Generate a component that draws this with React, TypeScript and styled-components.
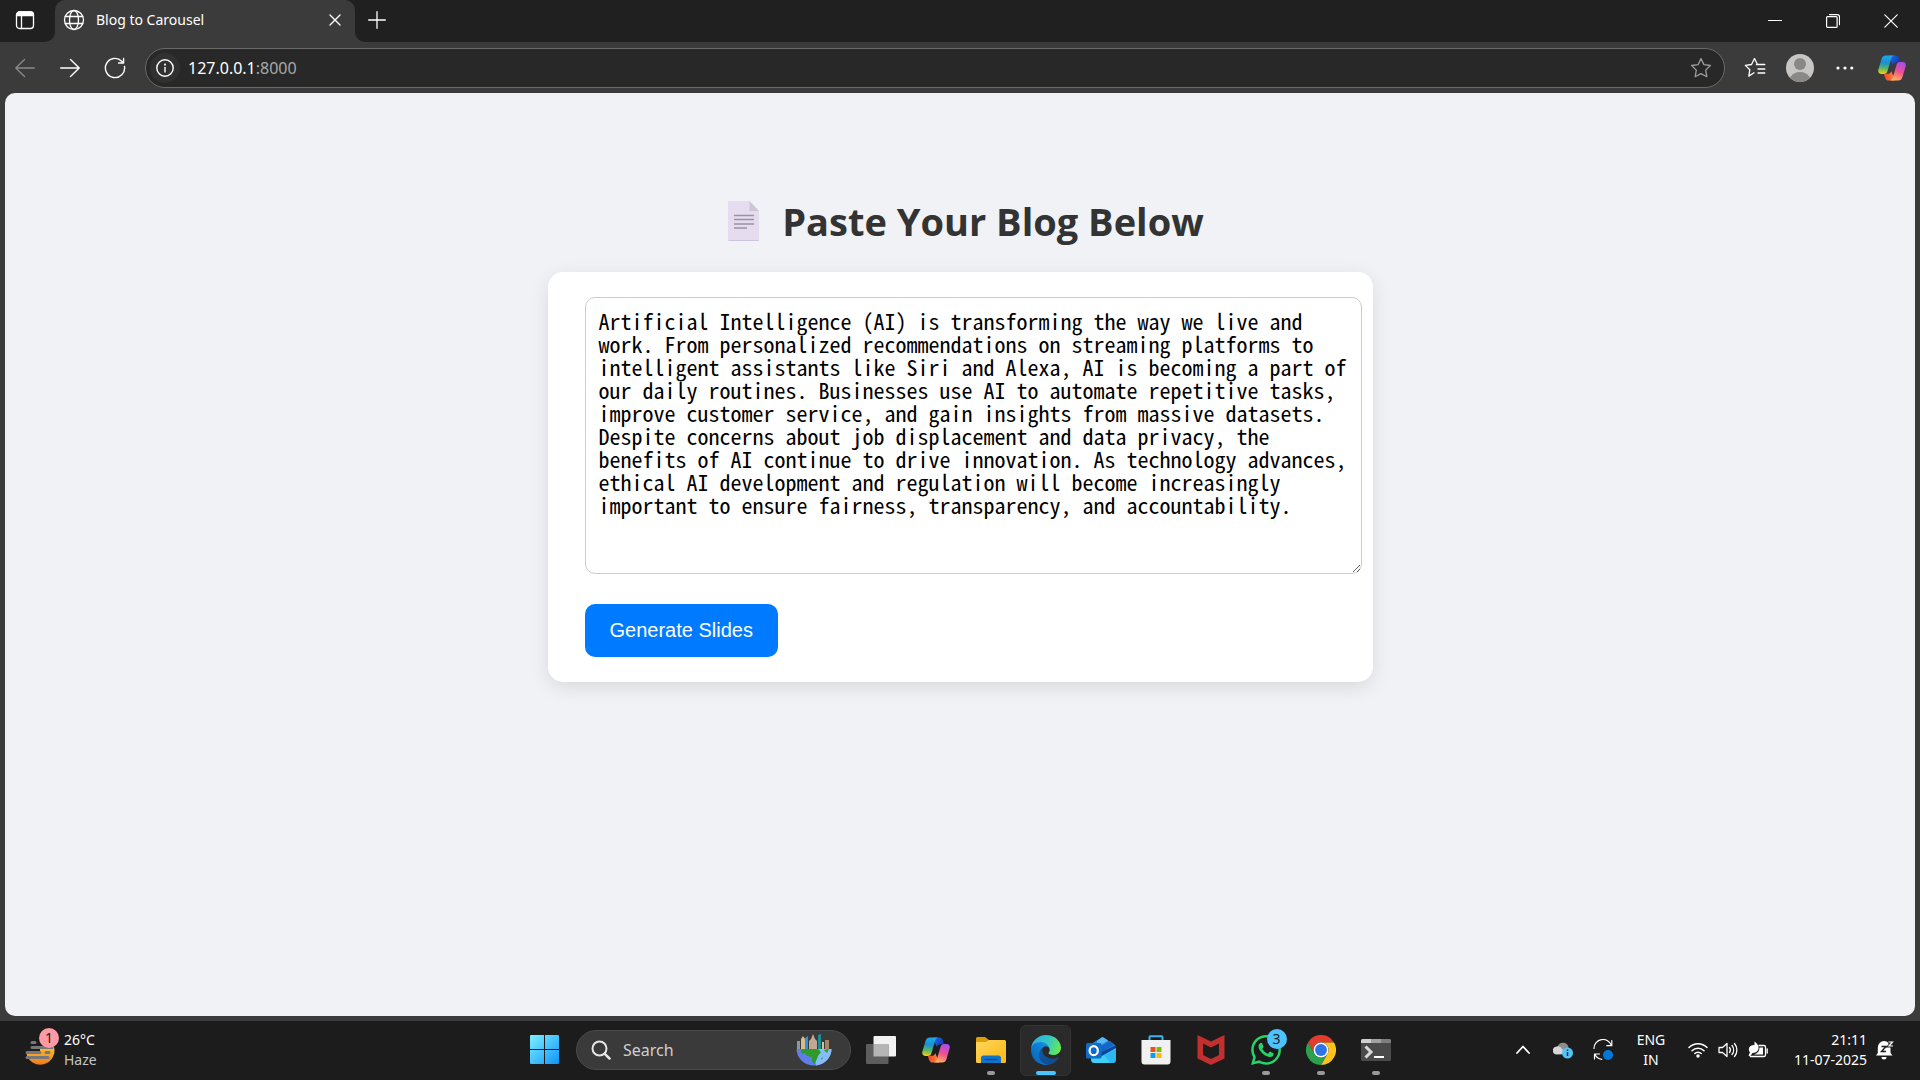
import React from "react";
import styled, { createGlobalStyle } from "styled-components";

const Global = createGlobalStyle`
  * { box-sizing: border-box; }
  body {
    margin: 0;
    background: #1c1c1c;
    font-family: "Noto Sans", "Open Sans", sans-serif;
  }
  button { font: inherit; color: inherit; }
`;

const Desktop = styled.div`
  display: flex;
  flex-direction: column;
  min-height: 100vh;
`;

/* ---------- browser window ---------- */

const Browser = styled.div`
  flex: 1;
  display: flex;
  flex-direction: column;
  background: #3b3b3b;
`;

const TitleBar = styled.header`
  display: flex;
  height: 42px;
  color: #fff;
`;

const StripStart = styled.div`
  width: 55px;
  display: flex;
  align-items: center;
  justify-content: center;
  padding: 0 5px 2px 0;
  background: #202020;
  border-bottom-right-radius: 10px;
`;

const StripEnd = styled.div`
  flex: 1;
  display: flex;
  justify-content: space-between;
  background: #202020;
  border-bottom-left-radius: 10px;
`;

const TabCell = styled.div`
  width: 300px;
  background: linear-gradient(#202020 20px, transparent 20px);
`;

const Tab = styled.div`
  display: flex;
  align-items: center;
  height: 42px;
  padding: 0 8px 2px 8px;
  background: #3b3b3b;
  border-radius: 10px 10px 0 0;
`;

const TabTitle = styled.span`
  flex: 1;
  margin-left: 11px;
  font-size: 14px;
  line-height: 20px;
`;

const IconButton = styled.button<{ $w?: number; $h?: number }>`
  display: flex;
  align-items: center;
  justify-content: center;
  width: ${(p) => p.$w ?? 24}px;
  height: ${(p) => p.$h ?? 24}px;
  padding: 0;
  border: 0;
  background: none;
  color: #fff;
  &:disabled { color: #8a8a8a; }
`;

const WindowControls = styled.div`
  display: flex;
`;

const Toolbar = styled.nav`
  display: flex;
  align-items: center;
  height: 51px;
`;

const NavButtons = styled.div`
  display: flex;
  padding: 0 8px 0 2px;
`;

const AddressBar = styled.div`
  flex: 1;
  display: flex;
  align-items: center;
  height: 40px;
  padding: 0 11px 0 4px;
  background: #282828;
  border: 1px solid #6a6a6a;
  border-radius: 20px;
  color: #fff;
`;

const SiteInfo = styled.span`
  display: flex;
  align-items: center;
  justify-content: center;
  width: 30px;
  height: 30px;
  margin-right: 8px;
  border-radius: 50%;
  background: #313131;
`;

const Url = styled.span`
  flex: 1;
  font-size: 16px;
  line-height: 24px;
`;

const Port = styled.span`
  color: #a9a9a9;
`;

const ToolbarEnd = styled.div`
  display: flex;
  padding: 0 3px 0 7px;
`;

/* ---------- page ---------- */

const Page = styled.main`
  flex: 1;
  margin: 0 5px 5px;
  padding: 102px 20px 40px;
  background: #f0f2f5;
  border-radius: 10px;
`;

const Heading = styled.h1`
  display: flex;
  align-items: center;
  justify-content: center;
  gap: 11px;
  margin: 0 0 25px;
  font-size: 38px;
  line-height: 52px;
  font-weight: 700;
  color: #333;
  font-family: "Open Sans", "Noto Sans", sans-serif;
`;

const Card = styled.form`
  display: flex;
  flex-direction: column;
  align-items: flex-start;
  gap: 30px;
  max-width: 825px;
  margin: 0 auto;
  padding: 25px 11px 25px 37px;
  background: #fff;
  border-radius: 15px;
  box-shadow: 0 5px 19px rgba(0, 0, 0, 0.1);
`;

const BlogText = styled.textarea`
  width: 100%;
  height: 277px;
  padding: 11px 13px;
  border: 1px solid #ccc;
  border-radius: 10px;
  background: #fff;
  color: #000;
  font-family: "Noto Sans Mono CJK SC", "DejaVu Sans Mono", monospace;
  font-size: 22px;
  line-height: 23px;
  outline: none;
  resize: both;
`;

const Generate = styled.button`
  padding: 15px 25px;
  border: 0;
  border-radius: 10px;
  background: #007bff;
  color: #fff;
  font-family: "Liberation Sans", Arial, sans-serif;
  font-size: 20px;
  line-height: 23px;
`;

/* ---------- taskbar ---------- */

const Taskbar = styled.footer`
  display: grid;
  grid-template-columns: 1fr auto 1fr;
  align-items: center;
  height: 59px;
  background: #1c1c1c;
  color: #fff;
  font-size: 14px;
  line-height: 20px;
`;

const Weather = styled.button`
  display: flex;
  align-items: center;
  gap: 6px;
  justify-self: start;
  padding: 0 0 2px 24px;
  border: 0;
  background: none;
  text-align: left;
`;

const Muted = styled.span`
  color: #c4c4c4;
`;

const Stack = styled.span<{ $align?: string }>`
  display: flex;
  flex-direction: column;
  align-items: ${(p) => p.$align ?? "flex-start"};
`;

const Apps = styled.div`
  display: flex;
  align-items: center;
`;

const Slot = styled.button<{ $active?: boolean }>`
  position: relative;
  display: flex;
  align-items: center;
  justify-content: center;
  width: 51px;
  height: 51px;
  margin: 0 2px;
  padding: 0 0 2px;
  border: 1px solid ${(p) => (p.$active ? "#343434" : "transparent")};
  border-radius: 6px;
  background: ${(p) => (p.$active ? "#2a2a2a" : "transparent")};
`;

const RunMark = styled.span<{ $active?: boolean }>`
  position: absolute;
  left: 50%;
  bottom: 0;
  width: ${(p) => (p.$active ? 20 : 8)}px;
  height: 4px;
  border-radius: 2px;
  background: ${(p) => (p.$active ? "#4cc2ff" : "#9a9a9a")};
  transform: translateX(-50%);
`;

const Badge = styled.span<{ $color: string }>`
  position: absolute;
  right: -1px;
  top: -4px;
  width: 20px;
  height: 20px;
  border-radius: 50%;
  background: ${(p) => p.$color};
  color: #1c1c1c;
  font-size: 14px;
  line-height: 20px;
  text-align: center;
`;

const IconWrap = styled.span`
  position: relative;
  display: flex;
`;

const AppBadge = styled(Badge)`
  right: -6px;
  top: -6px;
`;

const Search = styled.label`
  display: flex;
  align-items: center;
  width: 275px;
  height: 40px;
  margin: 0 2px 2px 4px;
  padding: 0 18px 0 14px;
  border: 1px solid #4a4a4a;
  border-radius: 20px;
  background: #3a3a3a;
`;

const SearchInput = styled.input`
  flex: 1;
  min-width: 0;
  margin-left: 12px;
  padding: 0;
  border: 0;
  outline: none;
  background: none;
  color: #fff;
  font: 16px/24px "Noto Sans", sans-serif;
  &::placeholder { color: #cfcfcf; opacity: 1; }
`;

const Tray = styled.div`
  display: flex;
  align-items: center;
  justify-self: end;
  padding: 0 17px 2px 0;
`;

const TrayButton = styled(IconButton)`
  height: 40px;
`;

const Lang = styled.button`
  width: 56px;
  padding: 0;
  border: 0;
  background: none;
  text-align: center;
`;

const Clock = styled.button`
  padding: 0;
  width: 90px;
  border: 0;
  background: none;
`;

/* ---------- drawings ---------- */

const line = { fill: "none", stroke: "currentColor", strokeLinecap: "round" as const, strokeLinejoin: "round" as const };

const Copilot = ({ id, size = 28 }: { id: string; size?: number }) => (
  <svg width={size} height={size} viewBox="0 0 28 28" aria-hidden="true">
    <defs>
      <linearGradient id={id + "a"} x1="0.4" y1="0" x2="0.3" y2="1">
        <stop offset="0" stopColor="#1ea8ee" />
        <stop offset="0.4" stopColor="#1c8fd0" />
        <stop offset="0.7" stopColor="#5bb765" />
        <stop offset="1" stopColor="#f4cf12" />
      </linearGradient>
      <linearGradient id={id + "b"} x1="0.7" y1="0" x2="0.4" y2="1">
        <stop offset="0" stopColor="#a74df0" />
        <stop offset="0.5" stopColor="#ee4f91" />
        <stop offset="1" stopColor="#ffb15c" />
      </linearGradient>
      <linearGradient id={id + "c"} x1="0" y1="0" x2="1" y2="0.6">
        <stop offset="0" stopColor="#1578e6" />
        <stop offset="1" stopColor="#1b32bd" />
      </linearGradient>
      <linearGradient id={id + "d"} x1="0" y1="0" x2="1" y2="0">
        <stop offset="0" stopColor="#f0432e" />
        <stop offset="1" stopColor="#ff8a3c" />
      </linearGradient>
    </defs>
    <path fill={`url(#${id}c)`} d="M11 1.4h6.2c1.9 0 3 .9 3.6 2.8l1.2 4h-3.6c-2 0-3.2.8-3.8 2.8z" />
    <path fill={`url(#${id}d)`} d="M17 26.6h-6.4c-1.9 0-3-.9-3.6-2.8l-1.2-4h3.7c2 0 3.2-.8 3.8-2.8z" />
    <path fill={`url(#${id}a)`} d="M7.8 1.4H16c-1.6.4-2.3 1.6-2.9 3.5l-3.6 12c-.7 2.2-1.7 3-3.7 3H3.6c-2.700 0-3.900-1.900-3.200-4.500L3.500 5c.7-2.400 2-3.600 4.300-3.600z" />
    <path fill={`url(#${id}b)`} d="M20.200 26.600H12c1.600-.4 2.300-1.600 2.900-3.500l3.600-12c.7-2.200 1.700-3 3.700-3h2.200c2.700 0 3.900 1.900 3.200 4.500L24.500 23c-.7 2.400-2 3.600-4.300 3.600z" />
  </svg>
);

const Doc = () => (
  <svg width="55" height="42" viewBox="0 0 55 42" aria-hidden="true">
    <path fill="#e6dcf0" d="M12.500 1h21l9.500 10v29a1 1 0 0 1-1 1h-29a1 1 0 0 1-1-1V2a1 1 0 0 1 .5-1z" />
    <path fill="#cdc5d3" d="M33.500 1 43 11h-9.500z" />
    <path fill="none" stroke="#cfc4d9" strokeWidth="1" d="M12.500 40.500h30" />
    <path fill="none" stroke="#9a92a3" strokeWidth="1.300" d="M18 15.500h20M18 19.500h20M18 24h20M18 28h13" />
  </svg>
);

const City = () => (
  <svg width="36" height="33" viewBox="0 0 36 33" aria-hidden="true">
    <path fill="#8f979a" d="M1 8h3v9H1z" />
    <path fill="#d8bd8c" d="M5 6l2-3 2 3v11H5z" />
    <path fill="#2f8fe0" d="M9 5l3-2v14H9z" />
    <path fill="#c2a793" d="M13 8l2-2 2-5 2 5 2 2v9h-8z" />
    <path fill="#178f95" d="M22 2l3-1v16h-3z" />
    <path fill="#d7c09d" d="M26 9h2v8h-2z" />
    <path fill="#a88465" d="M29 7h4v10h-4z" />
    <path fill="#5f7fe8" d="M.5 16h35a17.500 16.500 0 0 1-35 0z" />
    <path fill="#86bdf8" d="M18 16h17.500A17.500 16.500 0 0 1 20 32.400z" />
    <path fill="#2d9a2b" d="M5 17l5-1h12l3 3-3 4-2 5-2 3-2-3v-4l-5-1-2-3-3 1zM28 17l5-1-2 4z" />
    <path fill="#3ca63a" d="M25 25l2-1-1 3z" />
  </svg>
);

const Explorer = () => (
  <svg width="30" height="28" viewBox="0 0 30 28" aria-hidden="true">
    <defs>
      <linearGradient id="fold" x1="0" y1="0" x2="1" y2="1">
        <stop offset="0" stopColor="#ffd65c" />
        <stop offset="1" stopColor="#fcb813" />
      </linearGradient>
    </defs>
    <path fill="#dd9e0a" d="M0 2.500A1.500 1.500 0 0 1 1.500 1H9l4 3h5v8H0z" />
    <path fill="url(#fold)" d="M0 6h10l3-2h15.500A1.500 1.500 0 0 1 30 5.500v20a1.500 1.500 0 0 1-1.500 1.500h-27A1.500 1.500 0 0 1 0 25.500z" />
    <path fill="#1272c8" d="M5 27v-5a2.500 2.500 0 0 1 2.500-2.500h15A2.500 2.500 0 0 1 25 22v5z" />
    <path stroke="#0b4e91" strokeWidth="1.200" d="M8.500 23.500h13" />
  </svg>
);

const Edge = () => (
  <svg width="30" height="30" viewBox="0 0 256 256" aria-hidden="true">
    <defs>
      <linearGradient id="ed1" x1="0" y1="0" x2="1" y2="0.500">
        <stop offset="0" stopColor="#0c59a4" />
        <stop offset="1" stopColor="#114a8b" />
      </linearGradient>
      <linearGradient id="ed2" x1="1" y1="0" x2="0" y2="1">
        <stop offset="0" stopColor="#1b9de2" />
        <stop offset="0.500" stopColor="#0d7bd0" />
        <stop offset="1" stopColor="#0a5fb4" />
      </linearGradient>
      <linearGradient id="ed3" x1="0" y1="0.300" x2="1" y2="0.600">
        <stop offset="0" stopColor="#35a9e0" />
        <stop offset="0.500" stopColor="#33c6cb" />
        <stop offset="1" stopColor="#66eb4e" />
      </linearGradient>
    </defs>
    <path fill="url(#ed1)" d="M231 190.500c-3.400 1.800-6.900 3.400-10.500 4.700a101.900 101.900 0 0 1-35.900 6.500c-47.300 0-88.500-32.500-88.500-74.300a31.500 31.500 0 0 1 16.400-27.300c-42.800 1.800-53.800 46.400-53.800 72.500 0 74 68.100 81.400 82.800 81.400 7.900 0 19.800-2.300 27-4.600l1.300-.4a128.300 128.300 0 0 0 66.600-52.800 4 4 0 0 0-5.400-5.700z" />
    <path fill="url(#ed2)" d="M105.700 241.400a79.200 79.200 0 0 1-22.700-21.300 80.700 80.700 0 0 1 29.500-120c3.100-1.500 8.500-4.100 15.600-4a32.400 32.400 0 0 1 25.700 13 31.900 31.900 0 0 1 6.300 18.700c0-.2 24.500-79.600-80-79.600-43.900 0-80 41.600-80 78.200a130.200 130.200 0 0 0 12.100 56 128 128 0 0 0 156.400 67 75.600 75.600 0 0 1-62.800-8z" />
    <path fill="url(#ed3)" d="M152.300 148.900c-.8 1-3.300 2.500-3.300 5.700 0 2.600 1.700 5.200 4.800 7.300 14.300 10 41.400 8.600 41.500 8.600a59.600 59.600 0 0 0 30.300-8.300 61.400 61.400 0 0 0 30.400-52.900c.3-22.400-8-37.300-11.300-43.900C223.500 23.900 177.700 0 128 0A128 128 0 0 0 0 126.200c.5-36.500 36.800-66 80-66 3.500 0 23.500.3 42 10.100 16.300 8.600 24.900 18.900 30.800 29.200 6.200 10.700 7.300 24.100 7.300 29.500s-2.700 13.300-7.800 19.900z" />
  </svg>
);

const Outlook = () => (
  <svg width="30" height="28" viewBox="0 0 30 28" aria-hidden="true">
    <path fill="#1b86de" d="M5 8 15.500 1.600a2 2 0 0 1 2 0L29 9v10H5z" />
    <path fill="#56b8f5" d="M11 5l4.500-3.400a2 2 0 0 1 2 0L22 4.500 12 11z" />
    <path fill="#1565c8" d="M12 12 24 5l4.500 3.200L15 17z" />
    <path fill="#0b459c" d="M14 17 30 9v4L16 22z" />
    <path fill="#3fd0f7" d="M15 20.500 30 12v11.500a3.500 3.500 0 0 1-3.500 3.500h-18A3.500 3.500 0 0 1 5 23.500V21z" />
    <path fill="#1b9be8" d="M30 12v11.500a3.500 3.500 0 0 1-3.500 3.500H24l-6-8.300z" opacity=".45" />
    <rect y="7" width="15.500" height="15.500" rx="1.500" fill="#0f6cc9" />
    <ellipse cx="7.700" cy="14.700" rx="4.100" ry="4.500" fill="none" stroke="#fff" strokeWidth="2.200" />
  </svg>
);

const Store = () => (
  <svg width="30" height="30" viewBox="0 0 30 30" aria-hidden="true">
    <path fill="none" stroke="#37b6f0" strokeWidth="2" d="M8.500 6V2a.8.8 0 0 1 .8-.8h11.400a.8.8 0 0 1 .8.800v4" />
    <path fill="#f1f1f1" d="M.5 5h29v21.500a3 3 0 0 1-3 3h-23a3 3 0 0 1-3-3z" />
    <path fill="#f04f24" d="M9.500 12h5v5h-5z" />
    <path fill="#80ba01" d="M15.500 12h5v5h-5z" />
    <path fill="#02a4ef" d="M9.500 18h5v5h-5z" />
    <path fill="#ffb902" d="M15.500 18h5v5h-5z" />
  </svg>
);

const McAfee = () => (
  <svg width="28" height="30" viewBox="0 0 28 30" aria-hidden="true">
    <path fill="#c22f2f" d="M.5 0 14 6.500 27.500 0v23.500L14 30 .5 23.500zM6 8.500V20l8 4 8-4V8.500l-8 4z" fillRule="evenodd" />
  </svg>
);

const WhatsApp = () => (
  <svg width="30" height="30" viewBox="0 0 24 24" aria-hidden="true">
    <path fill="#25d366" d="M17.472 14.382c-.297-.149-1.758-.867-2.030-.967-.273-.099-.471-.148-.67.150-.197.297-.767.966-.94 1.164-.173.199-.347.223-.644.075-.297-.150-1.255-.463-2.390-1.475-.883-.788-1.480-1.761-1.653-2.059-.173-.297-.018-.458.130-.606.134-.133.298-.347.446-.520.149-.174.198-.298.298-.497.099-.198.050-.371-.025-.520-.075-.149-.669-1.612-.916-2.207-.242-.579-.487-.500-.669-.510-.173-.008-.371-.010-.570-.010-.198 0-.520.074-.792.372-.272.297-1.040 1.016-1.040 2.479 0 1.462 1.065 2.875 1.213 3.074.149.198 2.096 3.200 5.077 4.487.709.306 1.262.489 1.694.625.712.227 1.360.195 1.871.118.571-.085 1.758-.719 2.006-1.413.248-.694.248-1.289.173-1.413-.074-.124-.272-.198-.570-.347m-5.421 7.403h-.004a9.870 9.870 0 0 1-5.031-1.378l-.361-.214-3.741.982.998-3.648-.235-.374a9.860 9.860 0 0 1-1.510-5.260c.001-5.450 4.436-9.884 9.888-9.884 2.640 0 5.122 1.030 6.988 2.898a9.825 9.825 0 0 1 2.893 6.994c-.003 5.450-4.437 9.884-9.885 9.884m8.413-18.297A11.815 11.815 0 0 0 12.050 0C5.495 0 .160 5.335.157 11.892c0 2.096.547 4.142 1.588 5.945L.057 24l6.305-1.654a11.882 11.882 0 0 0 5.683 1.448h.005c6.554 0 11.890-5.335 11.893-11.893a11.821 11.821 0 0 0-3.480-8.413z" />
  </svg>
);

const Chrome = () => (
  <svg width="30" height="30" viewBox="0 0 48 48" aria-hidden="true">
    <path fill="#e33b2e" d="M3.200 12a24 24 0 0 1 41.600 0H24a12 12 0 0 0-10.400 18z" />
    <path fill="#fcc31e" d="M44.800 12A24 24 0 0 1 24 48l10.400-18A12 12 0 0 0 24 12z" />
    <path fill="#2da04d" d="M24 48A24 24 0 0 1 3.200 12l10.400 18a12 12 0 0 0 20.800 0z" />
    <circle cx="24" cy="24" r="12" fill="#fff" />
    <circle cx="24" cy="24" r="9.500" fill="#2f73e8" />
  </svg>
);

const Terminal = () => (
  <svg width="30" height="22" viewBox="0 0 30 22" aria-hidden="true">
    <rect width="30" height="22" rx="1.500" fill="#4a4a4a" />
    <path fill="#cfcfcf" d="M0 4V1.500A1.500 1.500 0 0 1 1.500 0H10v4z" />
    <path fill="#a2a2a2" d="M10 0h10v4H10z" />
    <path fill="#7f7f7f" d="M20 0h8.500A1.500 1.500 0 0 1 30 1.500V4H20z" />
    <path fill="none" stroke="#d9d9d9" strokeWidth="3" d="m4.500 7.500 5.500 5.500-5.500 5.500" />
    <path stroke="#fff" strokeWidth="2" d="M13 18h10" />
  </svg>
);

const Windows = () => (
  <svg width="29" height="29" viewBox="0 0 29 29" aria-hidden="true">
    <defs>
      <linearGradient id="win" gradientUnits="userSpaceOnUse" x1="0" y1="0" x2="29" y2="29">
        <stop offset="0" stopColor="#7cf0ff" />
        <stop offset="0.500" stopColor="#47c2fc" />
        <stop offset="1" stopColor="#0f95fb" />
      </linearGradient>
    </defs>
    <path fill="url(#win)" d="M1 0h13v14H0V1a1 1 0 0 1 1-1zM15 0h13a1 1 0 0 1 1 1v13H15zM0 15h14v14H1a1 1 0 0 1-1-1zM15 15h14v13a1 1 0 0 1-1 1H15z" />
  </svg>
);

const TaskView = () => (
  <svg width="30" height="28" viewBox="0 0 30 28" aria-hidden="true">
    <rect x="7.500" width="22.500" height="20.500" rx="1" fill="#f2f2f2" />
    <rect y="8" width="22.500" height="20" rx="1" fill="#5d5d5d" />
    <path fill="#b5b5b5" d="M7.500 8h15v12.500h-15z" />
  </svg>
);

const Haze = () => (
  <svg width="34" height="36" viewBox="0 0 34 36" aria-hidden="true">
    <defs>
      <linearGradient id="sun" x1="0" y1="0" x2="0" y2="1">
        <stop offset="0" stopColor="#fbc02d" />
        <stop offset="1" stopColor="#f07a1d" />
      </linearGradient>
    </defs>
    <path fill="url(#sun)" d="M16 15h14a14 14 0 0 1-27.500 7h13.500z" />
    <path fill="none" stroke="#777" strokeWidth="3" strokeLinecap="round" d="M8 10.500h3M8 15.500h20M3 20.500h13M22 20.500h3M3 25.500h21" />
  </svg>
);

export default function App() {
  return (
    <Desktop>
      <Global />
      <Browser>
        <TitleBar>
          <StripStart>
            <IconButton aria-label="Tab actions">
              <svg width="20" height="20" viewBox="0 0 20 20" {...line} strokeWidth="1.300">
                <rect x="1.500" y="2" width="17" height="16.500" rx="3" />
                <path d="M1.500 5.500V5a3 3 0 0 1 3-3h11a3 3 0 0 1 3 3v.5z" fill="currentColor" />
                <path d="M6.500 6v12.500" />
              </svg>
            </IconButton>
          </StripStart>
          <TabCell>
            <Tab>
              <svg width="22" height="22" viewBox="0 0 22 22" {...line} strokeWidth="1.300" aria-hidden="true">
                <circle cx="11" cy="11" r="9.500" />
                <ellipse cx="11" cy="11" rx="4.500" ry="9.500" />
                <path d="M2.300 7.500h17.400M2.300 14.500h17.400" />
              </svg>
              <TabTitle>Blog to Carousel</TabTitle>
              <IconButton aria-label="Close tab">
                <svg width="12" height="12" viewBox="0 0 12 12" {...line} strokeWidth="1.400"><path d="m1 1 10 10M11 1 1 11" /></svg>
              </IconButton>
            </Tab>
          </TabCell>
          <StripEnd>
            <IconButton $w={44} $h={39} aria-label="New tab">
              <svg width="18" height="18" viewBox="0 0 18 18" {...line} strokeWidth="1.300"><path d="M9 .7v16.600M.7 9h16.600" /></svg>
            </IconButton>
            <WindowControls>
              <IconButton $w={58} $h={42} aria-label="Minimize">
                <svg width="14" height="14" viewBox="0 0 14 14" {...line}><path d="M.5 6.500h13" /></svg>
              </IconButton>
              <IconButton $w={58} $h={42} aria-label="Restore">
                <svg width="14" height="14" viewBox="0 0 14 14" {...line} strokeWidth="1.200">
                  <rect x=".6" y="2.600" width="10.500" height="10.800" rx="1" />
                  <path d="M3.500.6h7.800a2.200 2.200 0 0 1 2.200 2.200v7.800" />
                </svg>
              </IconButton>
              <IconButton $w={58} $h={42} aria-label="Close">
                <svg width="14" height="14" viewBox="0 0 14 14" {...line} strokeWidth="1.200"><path d="m.8.8 12.400 12.400M13.200.8.8 13.200" /></svg>
              </IconButton>
            </WindowControls>
          </StripEnd>
        </TitleBar>

        <Toolbar>
          <NavButtons>
            <IconButton $w={45} $h={40} disabled aria-label="Back">
              <svg width="20" height="20" viewBox="0 0 20 20" {...line} strokeWidth="1.300"><path d="M19.300 10H.8M9.500 1.500.8 10l8.700 8.500" /></svg>
            </IconButton>
            <IconButton $w={45} $h={40} aria-label="Forward">
              <svg width="20" height="20" viewBox="0 0 20 20" {...line} strokeWidth="1.400"><path d="M.7 10h18.500M10.500 1.500l8.700 8.500-8.700 8.500" /></svg>
            </IconButton>
            <IconButton $w={45} $h={40} aria-label="Reload">
              <svg width="22" height="22" viewBox="0 0 22 22" {...line} strokeWidth="1.400"><path d="M20.500 9.500A9.600 9.600 0 1 1 17.800 4.200L19.300 6M19.600 1.500V6h-5" /></svg>
            </IconButton>
          </NavButtons>
          <AddressBar>
            <SiteInfo>
              <svg width="18" height="18" viewBox="0 0 18 18" {...line} strokeWidth="1.400" aria-hidden="true">
                <circle cx="9" cy="9" r="8.200" />
                <path d="M9 8.500V13" />
                <circle cx="9" cy="5.600" r=".4" />
              </svg>
            </SiteInfo>
            <Url>127.0.0.1<Port>:8000</Port></Url>
            <IconButton aria-label="Add to favorites">
              <svg width="22" height="22" viewBox="0 0 22 22" {...line} stroke="#9b9b9b" strokeWidth="1.300">
                <path d="m11 1.600 2.900 6 6.500.9-4.700 4.600 1.100 6.600-5.800-3.100-5.800 3.100 1.100-6.600L1.600 8.500l6.500-.9z" />
              </svg>
            </IconButton>
          </AddressBar>
          <ToolbarEnd>
            <IconButton $w={45} $h={40} aria-label="Favorites">
              <svg width="22" height="22" viewBox="0 0 22 22" {...line} strokeWidth="1.300">
                <path d="M12.500 7.500h8.300M14 12h6.800M14 16h6.800M10 15.800l-5.200 3.300 1-6.300L1.300 8.400l6.200-.9L10.500 1.500l3 6" />
              </svg>
            </IconButton>
            <IconButton $w={45} $h={40} aria-label="Profile">
              <svg width="28" height="28" viewBox="0 0 28 28">
                <defs><clipPath id="face"><circle cx="14" cy="14" r="14" /></clipPath></defs>
                <g clipPath="url(#face)">
                  <path fill="#c8c6c4" d="M0 0h28v28H0z" />
                  <circle cx="14" cy="10" r="6" fill="#8a8886" />
                  <ellipse cx="14" cy="25.500" rx="10" ry="7.500" fill="#8a8886" />
                </g>
              </svg>
            </IconButton>
            <IconButton $w={45} $h={40} aria-label="Settings and more">
              <svg width="18" height="4" viewBox="0 0 18 4" fill="currentColor"><circle cx="2" cy="2" r="1.600" /><circle cx="9" cy="2" r="1.600" /><circle cx="15.800" cy="2" r="1.600" /></svg>
            </IconButton>
            <IconButton $w={50} $h={40} aria-label="Copilot"><Copilot id="cpa" /></IconButton>
          </ToolbarEnd>
        </Toolbar>

        <Page>
          <Heading><Doc />Paste Your Blog Below</Heading>
          <Card onSubmit={(e) => e.preventDefault()}>
            <BlogText
              aria-label="Blog text"
              spellCheck={false}
              defaultValue="Artificial Intelligence (AI) is transforming the way we live and work. From personalized recommendations on streaming platforms to intelligent assistants like Siri and Alexa, AI is becoming a part of our daily routines. Businesses use AI to automate repetitive tasks, improve customer service, and gain insights from massive datasets. Despite concerns about job displacement and data privacy, the benefits of AI continue to drive innovation. As technology advances, ethical AI development and regulation will become increasingly important to ensure fairness, transparency, and accountability."
            />
            <Generate type="submit">Generate Slides</Generate>
          </Card>
        </Page>
      </Browser>

      <Taskbar>
        <Weather>
          <IconWrap><Haze /><Badge $color="#ff99a4">1</Badge></IconWrap>
          <Stack><span>26°C</span><Muted>Haze</Muted></Stack>
        </Weather>

        <Apps>
          <Slot aria-label="Start"><Windows /></Slot>
          <Search>
            <svg width="20" height="20" viewBox="0 0 20 20" {...line} stroke="#e6e6e6" strokeWidth="2" aria-hidden="true"><circle cx="8.500" cy="8.500" r="7" /><path d="m13.800 13.800 4.700 4.700" strokeWidth="2.500" /></svg>
            <SearchInput placeholder="Search" aria-label="Search" />
            <City />
          </Search>
          <Slot aria-label="Task view"><TaskView /></Slot>
          <Slot aria-label="Copilot"><Copilot id="cpb" /></Slot>
          <Slot aria-label="File Explorer"><Explorer /><RunMark /></Slot>
          <Slot $active aria-label="Microsoft Edge"><Edge /><RunMark $active /></Slot>
          <Slot aria-label="Outlook"><Outlook /></Slot>
          <Slot aria-label="Microsoft Store"><Store /></Slot>
          <Slot aria-label="McAfee"><McAfee /></Slot>
          <Slot aria-label="WhatsApp"><IconWrap><WhatsApp /><AppBadge $color="#4cc2ff">3</AppBadge></IconWrap><RunMark /></Slot>
          <Slot aria-label="Chrome"><Chrome /><RunMark /></Slot>
          <Slot aria-label="Terminal"><Terminal /><RunMark /></Slot>
        </Apps>

        <Tray>
          <TrayButton $w={40} aria-label="Show hidden icons">
            <svg width="14" height="9" viewBox="0 0 14 9" {...line} strokeWidth="1.800"><path d="m1 8 6-6.500L13 8" /></svg>
          </TrayButton>
          <TrayButton $w={40} aria-label="OneDrive">
            <svg width="20" height="18" viewBox="0 0 20 18">
              <path fill="#8d8d8d" d="M5 5a5.500 5.500 0 0 1 10.500 1.500V11H5z" />
              <path fill="#d6d6d6" d="M4 13.500a4 4 0 0 1-.3-8C6 5 8 6 9 8l5 5z" />
              <circle cx="14.500" cy="12" r="5.500" fill="#55c3f5" />
              <path stroke="#143a52" strokeWidth="1.500" d="M14.500 11v4M14.500 8.500V10" />
            </svg>
          </TrayButton>
          <TrayButton $w={40} aria-label="Windows Update">
            <svg width="20" height="22" viewBox="0 0 20 22" {...line} strokeWidth="1.200">
              <path d="M1 9.500A9 9 0 0 1 18.500 6.500M18.800 1.500v5.200h-5M1.500 20v-5h5M1.800 15.300a9 9 0 0 0 7 5" />
              <circle cx="15" cy="16" r="5" fill="#0078d7" stroke="none" />
            </svg>
          </TrayButton>
          <Lang><Stack $align="center"><span>ENG</span><span>IN</span></Stack></Lang>
          <TrayButton $w={38} aria-label="Wi-Fi">
            <svg width="20" height="16" viewBox="0 0 20 16" {...line} strokeWidth="1.500">
              <path d="M1 5.500a12.500 12.500 0 0 1 18 0M4 8.700a8.400 8.400 0 0 1 12 0M6.800 11.500a4.500 4.500 0 0 1 6.400 0" />
              <circle cx="10" cy="14" r="1" fill="currentColor" />
            </svg>
          </TrayButton>
          <TrayButton $w={22} aria-label="Volume">
            <svg width="20" height="18" viewBox="0 0 20 18" {...line} strokeWidth="1.300">
              <path d="M1 6.500h3.500L9 2.500v13l-4.500-4H1zM11.500 6.500a4 4 0 0 1 0 5M14 4.500a7 7 0 0 1 0 9M16.500 2.500a10 10 0 0 1 0 13" />
            </svg>
          </TrayButton>
          <TrayButton $w={38} aria-label="Battery">
            <svg width="20" height="18" viewBox="0 0 20 18" {...line} strokeWidth="1.300">
              <path d="M11 4.500h5a1.500 1.500 0 0 1 1.500 1.500v8a1.500 1.500 0 0 1-1.500 1.500H2.500M19.200 8v4" />
              <path fill="currentColor" stroke="none" d="M6.500.5c3.500 2.500 5 5.500 3.500 8.500-1 2-3 3-5.500 3L2 15.500.5 14.500 2 11.500C-.5 8 1 4 6.500 4zM11.500 6.500H15v7H6c3.500-1 5.500-3.500 5.500-7z" />
            </svg>
          </TrayButton>
          <Clock><Stack $align="flex-end"><span>21:11</span><span>11-07-2025</span></Stack></Clock>
          <TrayButton $w={36} aria-label="Notifications">
            <svg width="18" height="20" viewBox="0 0 18 20">
              <path fill="#fff" d="M8 1a6.500 6.500 0 0 1 6.500 6.500V13l2 2.500H0L1.800 13V7.500A6.500 6.500 0 0 1 8 1zM5.500 17h5a2.500 2.500 0 0 1-5 0z" />
              <path fill="none" stroke="#1c1c1c" strokeWidth="1.400" d="M5.500 6.500H10l-4.500 5H10" />
              <path fill="none" stroke="#1c1c1c" strokeWidth="3" d="M12 2h4.500l-3.500 4h4" />
              <path fill="none" stroke="#fff" strokeWidth="1.200" d="M12.500 2h4l-3.500 4h4" />
            </svg>
          </TrayButton>
        </Tray>
      </Taskbar>
    </Desktop>
  );
}
